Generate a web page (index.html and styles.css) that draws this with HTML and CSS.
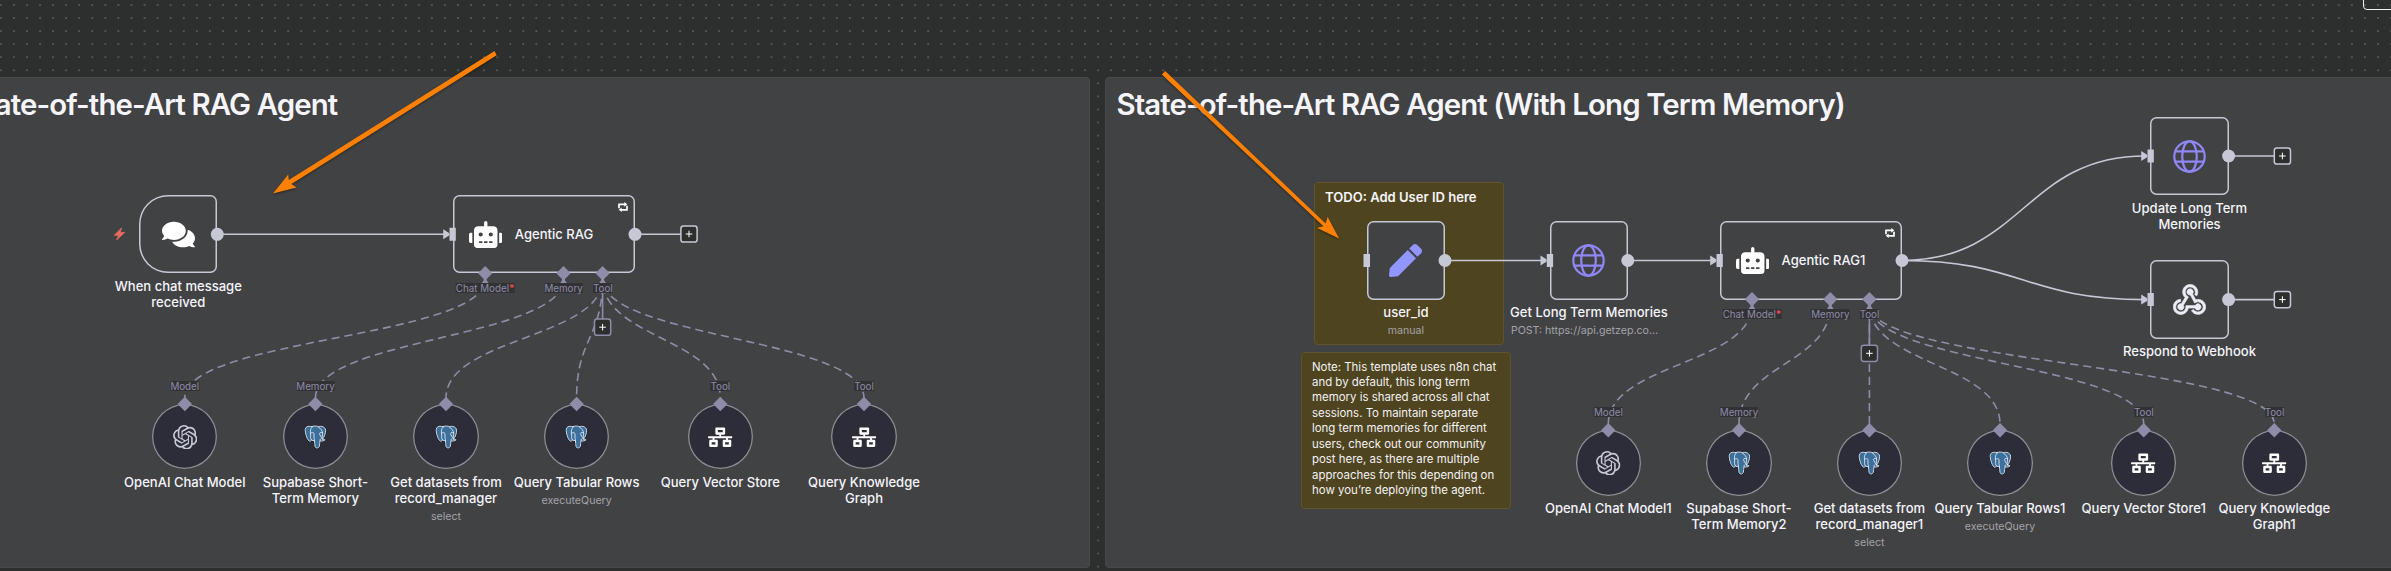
FILE: index.html
```html
<!DOCTYPE html>
<html lang="en">
<head>
<meta charset="utf-8">
<title>Workflow canvas</title>
<link rel="stylesheet" href="styles.css">
</head>
<body>
<svg class="defs" width="0" height="0" aria-hidden="true">
  <defs>
    <pattern id="grid" x="-5.7" y="-1.6" width="13.061" height="13.061" patternUnits="userSpaceOnUse"><rect x="5.85" y="5.85" width="1.45" height="1.45" fill="#6d6e6e"/></pattern>
    <symbol id="comments" viewBox="0 0 576 512"><path d="M416 192c0-88.4-93.1-160-208-160S0 103.600 0 192c0 34.300 14.100 65.900 38 92-13.400 30.200-35.500 54.200-35.800 54.500-2.200 2.300-2.800 5.700-1.500 8.700S4.800 352 8 352c36.600 0 66.900-12.300 88.700-25 32.200 15.700 70.300 25 111.300 25 114.900 0 208-71.600 208-160zm122 220c23.900-26 38-57.700 38-92 0-66.900-53.500-124.200-129.300-148.100.9 6.600 1.300 13.300 1.300 20.100 0 105.900-107.700 192-240 192-10.800 0-21.300-.8-31.700-1.900C207.800 439.600 281.800 480 368 480c41 0 79.100-9.200 111.300-25 21.800 12.700 52.100 25 88.700 25 3.200 0 6.100-1.900 7.300-4.800 1.300-2.900.7-6.300-1.500-8.700-.3-.3-22.400-24.200-35.800-54.500z"/></symbol>
    <symbol id="robot" viewBox="0 0 640 512"><path d="M32,224H64V416H32A32,32,0,0,1,0,384V256A32,32,0,0,1,32,224Zm512-48V448a64,64,0,0,1-64,64H160a64,64,0,0,1-64-64V176a80,80,0,0,1,80-80H288V32a32,32,0,0,1,64,0V96H464A80,80,0,0,1,544,176ZM264,256a40,40,0,1,0-40,40A40,40,0,0,0,264,256Zm-8,128H192v32h64Zm96,0H288v32h64ZM456,256a40,40,0,1,0-40,40A40,40,0,0,0,456,256Zm-8,128H384v32h64ZM640,256V384a32,32,0,0,1-32,32H576V224h32A32,32,0,0,1,640,256Z"/></symbol>
    <symbol id="network" viewBox="0 0 640 512"><path d="M640 264v-16c0-8.840-7.160-16-16-16H344v-40h72c17.670 0 32-14.330 32-32V32c0-17.670-14.330-32-32-32H224c-17.670 0-32 14.330-32 32v128c0 17.670 14.330 32 32 32h72v40H16c-8.840 0-16 7.160-16 16v16c0 8.840 7.160 16 16 16h104v40H64c-17.670 0-32 14.330-32 32v128c0 17.670 14.330 32 32 32h160c17.670 0 32-14.330 32-32V352c0-17.670-14.330-32-32-32h-56v-40h304v40h-56c-17.670 0-32 14.330-32 32v128c0 17.670 14.330 32 32 32h160c17.670 0 32-14.330 32-32V352c0-17.670-14.330-32-32-32h-56v-40h104c8.840 0 16-7.160 16-16zM256 128V64h128v64H256zm-64 320H96v-64h96v64zm352 0h-96v-64h96v64z"/></symbol>
    <symbol id="pen" viewBox="0 0 512 512"><path d="M290.740 93.240l128.020 128.020-277.990 277.990-114.140 12.600C11.350 513.540-1.560 500.620.14 485.340l12.700-114.220 277.900-277.880zm207.200-19.060l-60.110-60.110c-18.750-18.750-49.160-18.750-67.910 0l-56.550 56.550 128.020 128.020 56.550-56.550c18.750-18.760 18.750-49.160 0-67.910z"/></symbol>
    <symbol id="globe" viewBox="0 0 33 33"><g fill="none" stroke="currentColor" stroke-width="2.2"><circle cx="16.500" cy="16.500" r="15.200"/><ellipse cx="16.500" cy="16.500" rx="7.300" ry="15.200"/><path d="M2.500 11.300h28M2.500 21.700h28"/></g></symbol>
    <symbol id="webhook" viewBox="2 2.400 20 19"><path stroke="currentColor" stroke-width=".4" d="M10.460,19C9,21.070 6.150,21.590 4.090,20.150C2.040,18.710 1.560,15.840 3,13.750C3.870,12.500 5.210,11.830 6.580,11.770L6.630,13.200C5.720,13.270 4.840,13.740 4.270,14.560C3.270,16 3.580,17.940 4.950,18.910C6.330,19.870 8.260,19.500 9.260,18.070C9.570,17.620 9.750,17.130 9.820,16.630V15.620L15.400,15.580L15.470,15.470C16,14.550 17.150,14.230 18.050,14.750C18.950,15.270 19.260,16.430 18.730,17.350C18.200,18.260 17.040,18.580 16.140,18.060C15.730,17.830 15.440,17.460 15.310,17.040L11.240,17.060C11.130,17.730 10.870,18.380 10.460,19M17.740,11.860C20.270,12.170 22.070,14.440 21.760,16.930C21.450,19.430 19.150,21.200 16.620,20.890C15.130,20.710 13.900,19.860 13.190,18.680L14.430,17.960C14.920,18.730 15.750,19.280 16.750,19.410C18.500,19.620 20.050,18.430 20.260,16.760C20.470,15.090 19.230,13.560 17.500,13.350C16.960,13.290 16.440,13.360 15.970,13.530L15.120,13.970L12.540,9.200H12.320C11.260,9.160 10.410,8.290 10.440,7.250C10.470,6.210 11.400,5.400 12.450,5.440C13.500,5.500 14.330,6.350 14.300,7.390C14.280,7.830 14.110,8.230 13.840,8.540L15.740,12.050C16.360,11.850 17.040,11.780 17.740,11.860M8.250,9.140C7.250,6.790 8.310,4.100 10.620,3.120C12.940,2.140 15.620,3.250 16.620,5.600C17.210,6.970 17.090,8.470 16.420,9.670L15.180,8.950C15.600,8.140 15.670,7.150 15.270,6.220C14.590,4.620 12.780,3.850 11.230,4.500C9.670,5.160 8.970,7 9.650,8.600C9.930,9.260 10.400,9.770 10.970,10.110L11.360,10.320L8.290,15.310C8.320,15.360 8.360,15.420 8.390,15.500C8.880,16.410 8.540,17.560 7.620,18.050C6.710,18.540 5.560,18.180 5.060,17.240C4.570,16.310 4.910,15.160 5.830,14.670C6.220,14.460 6.650,14.410 7.060,14.500L9.370,10.730C8.900,10.300 8.500,9.760 8.250,9.140Z"/></symbol>
    <symbol id="openai" viewBox="0 0 24 24"><path d="M22.2819 9.8211a5.9847 5.9847 0 0 0-.5157-4.9108 6.0462 6.0462 0 0 0-6.5098-2.9A6.0651 6.0651 0 0 0 4.9807 4.1818a5.9847 5.9847 0 0 0-3.9977 2.9 6.0462 6.0462 0 0 0 .7427 7.0966 5.98 5.98 0 0 0 .511 4.9107 6.051 6.051 0 0 0 6.5146 2.9001A5.9847 5.9847 0 0 0 13.2599 24a6.0557 6.0557 0 0 0 5.7718-4.2058 5.9894 5.9894 0 0 0 3.9977-2.9001 6.0557 6.0557 0 0 0-.7475-7.0729zm-9.022 12.6081a4.4755 4.4755 0 0 1-2.8764-1.0408l.1419-.0804 4.7783-2.7582a.7948.7948 0 0 0 .3927-.6813v-6.7369l2.02 1.1686a.071.071 0 0 1 .038.052v5.5826a4.504 4.504 0 0 1-4.4945 4.4944zm-9.6607-4.1254a4.4708 4.4708 0 0 1-.5346-3.0137l.142.0852 4.783 2.7582a.7712.7712 0 0 0 .7806 0l5.8428-3.3685v2.3324a.0804.0804 0 0 1-.0332.0615L9.74 19.9502a4.4992 4.4992 0 0 1-6.1408-1.6464zM2.3408 7.8956a4.485 4.485 0 0 1 2.3655-1.9728V11.6a.7664.7664 0 0 0 .3879.6765l5.8144 3.3543-2.0201 1.1685a.0757.0757 0 0 1-.071 0l-4.8303-2.7865A4.504 4.504 0 0 1 2.3408 7.872zm16.5963 3.8558L13.1038 8.364 15.1192 7.2a.0757.0757 0 0 1 .071 0l4.8303 2.7913a4.4944 4.4944 0 0 1-.6765 8.1042v-5.6772a.79.79 0 0 0-.407-.667zm2.0107-3.0231l-.142-.0852-4.7735-2.7818a.7759.7759 0 0 0-.7854 0L9.409 9.2297V6.8974a.0662.0662 0 0 1 .0284-.0615l4.8303-2.7866a4.4992 4.4992 0 0 1 6.6802 4.66zM8.3065 12.863l-2.02-1.1638a.0804.0804 0 0 1-.038-.0567V6.0742a4.4992 4.4992 0 0 1 7.3757-3.4537l-.142.0805L8.704 5.459a.7948.7948 0 0 0-.3927.6813zm1.0976-2.3654l2.602-1.4998 2.6069 1.4998v2.9994l-2.5974 1.4997-2.6067-1.4997Z"/></symbol>
    <symbol id="postgres" viewBox="0 0 24 25">
      <g stroke-linejoin="round" stroke-linecap="round">
        <path fill="#15171c" stroke="#15171c" stroke-width="1.800" d="M8 1.600C4.500.4 1.600 1.800 1.700 5.400c.1 3.300 1.600 8.300 3.500 10.500 1 1.200 2.200.5 3-.4l3 .6c.3 1.600.1 4.100.6 6 .5 1.700 3.700 2 4.400-.4.4-1.700.3-4 .6-5.500 1.500.5 4.300.2 5.300-1.200-1 .1-2 .1-2.600-.4 1.700-2.500 3.300-6.400 3.100-9.300-.3-3.400-4.300-4.700-7.300-3.700C13.300.8 10.500.8 8 1.600z"/>
        <path fill="#3d6f9c" stroke="#e6ecf2" stroke-width=".9" d="M8 1.600C4.500.4 1.600 1.800 1.700 5.400c.1 3.300 1.600 8.300 3.500 10.500 1 1.200 2.200.5 3-.4l3 .6c.3 1.600.1 4.100.6 6 .5 1.700 3.700 2 4.400-.4.4-1.700.3-4 .6-5.500 1.500.5 4.300.2 5.300-1.200-1 .1-2 .1-2.600-.4 1.700-2.500 3.300-6.400 3.100-9.300-.3-3.400-4.300-4.700-7.300-3.700C13.300.8 10.500.8 8 1.600z"/>
        <path fill="none" stroke="#e6ecf2" stroke-width=".9" d="M9.300 1.700C6.300 4 7 8 7.300 10c.2 2.100-.8 3.600 1 5.300M7.400 8.400c1-.9 2.500-.8 3.100 0 .7 1.500-.2 4 .4 5.500.3.8.3 1.500.3 2.200M15.300 2.100c2.600 1.400 4.100 4.200 4.200 6.200.1 2.300-1.100 4 .1 6M19.400 8c-1.400-.8-2.600-.5-2.900.3-.3 2.300 1.800 3.900 2.800 5.900M16.800 15.600c-.1-.7.300-1.100.9-1.500"/>
      </g>
    </symbol>
    <symbol id="loop" viewBox="0 0 10 10"><path fill="none" stroke="#fff" stroke-width="1.700" d="M1 6.200V2.300h6M9 3.800v4H3"/><path fill="#fff" d="M6.300 0L9.300 2.300 6.300 4.700zM3.700 5.400L.7 7.700l3 2.300z"/></symbol>
    <g id="out"><circle r="6.500" fill="#c6c8d6"/></g>
    <g id="in"><path fill="#c6c8d6" d="M-3-6.500h6.300v13H-3zM-9.300-5L-3.400-1.300V1.300L-9.300 5z"/></g>
    <path id="arrow-foot" fill="#8e8ca8" d="M-1.500 4h3v3L3.500 10h-7L-1.500 7z"/>
    <path id="diamond" fill="#8e8ca8" d="M0-7.200L7.200 0 0 7.200-7.200 0z"/>
    <g id="add"><rect x="-8.100" y="-8.100" width="16.200" height="16.200" rx="2.600" fill="#2d2e2e" stroke="currentColor" stroke-width="1.500"/><path d="M-3.300 0h6.600M0-3.300v6.600" stroke="#fff" stroke-width="1"/></g>
  </defs>
</svg>

<main class="canvas">
  <svg class="layer" width="2391" height="571"><rect width="2391" height="571" fill="url(#grid)"/></svg>

  <section class="sticky gray panel-a"><h1>State-of-the-Art RAG Agent</h1></section>
  <section class="sticky gray panel-b"><h1>State-of-the-Art RAG Agent (With Long Term Memory)</h1></section>
  <section class="sticky gold todo"><h4>TODO: Add User ID here</h4></section>
  <section class="sticky gold note"><p>Note: This template uses n8n chat<br>and by default, this long term<br>memory is shared across all chat<br>sessions. To maintain separate<br>long term memories for different<br>users, check out our community<br>post here, as there are multiple<br>approaches for this depending on<br>how you’re deploying the agent.</p></section>

  <svg class="layer" width="2391" height="571" fill="none">
    <g class="wire">
      <path d="M217 234.300H445M635 234.300H681M1445 260.500H1542M1628 260.500H1712M2229 156H2274M2229 299.600H2274"/>
      <path d="M1902 260.500C2022 260.500 2025 156 2145 156M1902 260.500C2022 260.500 2025 299.600 2145 299.600"/>
    </g>
    <g class="wire soft">
      <path d="M602.600 280V319M1869.400 306V345"/>
      <g class="dash">
        <path d="M485.200 279C485.200 338 184.800 338 184.800 398"/>
        <path d="M563.500 279C563.500 338 315.400 338 315.400 398"/>
        <path d="M602.600 279C602.600 338 446 338 446 398"/>
        <path d="M602.600 279C602.600 338 576.600 338 576.600 398"/>
        <path d="M602.600 279C602.600 338 720.300 338 720.300 398"/>
        <path d="M602.600 279C602.600 338 864 338 864 398"/>
        <path d="M1752 305C1752 364 1608.300 364 1608.300 424"/>
        <path d="M1830.300 305C1830.300 364 1739 364 1739 424"/>
        <path d="M1869.400 305V424"/>
        <path d="M1869.400 305C1869.400 364 2000 364 2000 424"/>
        <path d="M1869.400 305C1869.400 364 2143.700 364 2143.700 424"/>
        <path d="M1869.400 305C1869.400 364 2274.300 364 2274.300 424"/>
      </g>
    </g>
  </svg>

  <article class="node trigger"><div class="box round"><svg class="i33"><use href="#comments"/></svg></div><b>When chat message<br>received</b></article>
  <article class="node agent-a"><div class="box wide"><svg class="robot"><use href="#robot"/></svg><b>Agentic RAG</b><svg class="loop"><use href="#loop"/></svg></div></article>
  <article class="node user"><div class="box"><svg class="i33 pen"><use href="#pen"/></svg></div><b>user_id</b><small>manual</small></article>
  <article class="node getltm"><div class="box"><svg class="i33 globe"><use href="#globe"/></svg></div><b>Get Long Term Memories</b><small class="clip">POST: https://api.getzep.co...</small></article>
  <article class="node agent-b"><div class="box wide"><svg class="robot"><use href="#robot"/></svg><b>Agentic RAG1</b><svg class="loop"><use href="#loop"/></svg></div></article>
  <article class="node update"><div class="box"><svg class="i33 globe"><use href="#globe"/></svg></div><b>Update Long Term<br>Memories</b></article>
  <article class="node respond"><div class="box"><svg class="i33 hook"><use href="#webhook"/></svg></div><b>Respond to Webhook</b></article>

  <article class="node sub a1"><div class="disc"><svg class="i24 ai"><use href="#openai"/></svg></div><b>OpenAI Chat Model</b></article>
  <article class="node sub a2"><div class="disc"><svg class="i24"><use href="#postgres"/></svg></div><b>Supabase Short-<br>Term Memory</b></article>
  <article class="node sub a3"><div class="disc"><svg class="i24"><use href="#postgres"/></svg></div><b>Get datasets from<br>record_manager</b><small>select</small></article>
  <article class="node sub a4"><div class="disc"><svg class="i24"><use href="#postgres"/></svg></div><b>Query Tabular Rows</b><small>executeQuery</small></article>
  <article class="node sub a5"><div class="disc"><svg class="i24"><use href="#network"/></svg></div><b>Query Vector Store</b></article>
  <article class="node sub a6"><div class="disc"><svg class="i24"><use href="#network"/></svg></div><b>Query Knowledge<br>Graph</b></article>

  <article class="node sub b1"><div class="disc"><svg class="i24 ai"><use href="#openai"/></svg></div><b>OpenAI Chat Model1</b></article>
  <article class="node sub b2"><div class="disc"><svg class="i24"><use href="#postgres"/></svg></div><b>Supabase Short-<br>Term Memory2</b></article>
  <article class="node sub b3"><div class="disc"><svg class="i24"><use href="#postgres"/></svg></div><b>Get datasets from<br>record_manager1</b><small>select</small></article>
  <article class="node sub b4"><div class="disc"><svg class="i24"><use href="#postgres"/></svg></div><b>Query Tabular Rows1</b><small>executeQuery</small></article>
  <article class="node sub b5"><div class="disc"><svg class="i24"><use href="#network"/></svg></div><b>Query Vector Store1</b></article>
  <article class="node sub b6"><div class="disc"><svg class="i24"><use href="#network"/></svg></div><b>Query Knowledge<br>Graph1</b></article>

  <svg class="layer" width="2391" height="571">
    <use href="#out" x="217.300" y="234.300"/><use href="#out" x="635" y="234.300"/><use href="#out" x="1445" y="260.500"/><use href="#out" x="1627.800" y="260.500"/><use href="#out" x="1902" y="260.500"/><use href="#out" x="2228.600" y="156"/><use href="#out" x="2228.600" y="299.600"/>
    <use href="#in" x="452.500" y="234.300"/><use href="#in" x="1549.800" y="260.500"/><use href="#in" x="1719.500" y="260.500"/><use href="#in" x="2150.500" y="156"/><use href="#in" x="2150.500" y="299.600"/>
    <rect x="1363.500" y="254" width="6.500" height="13" fill="#c6c8d6"/>
    <use href="#arrow-foot" x="485.200" y="273.200"/><use href="#arrow-foot" x="563.500" y="273.200"/><use href="#arrow-foot" x="602.600" y="273.200"/><use href="#arrow-foot" x="1752" y="299.300"/><use href="#arrow-foot" x="1830.300" y="299.300"/><use href="#arrow-foot" x="1869.400" y="299.300"/>
    <use href="#diamond" x="485.200" y="273.200"/><use href="#diamond" x="563.500" y="273.200"/><use href="#diamond" x="602.600" y="273.200"/><use href="#diamond" x="1752" y="299.300"/><use href="#diamond" x="1830.300" y="299.300"/><use href="#diamond" x="1869.400" y="299.300"/>
    <use href="#diamond" x="184.800" y="404"/><use href="#diamond" x="315.400" y="404"/><use href="#diamond" x="446" y="404"/><use href="#diamond" x="576.600" y="404"/><use href="#diamond" x="720.300" y="404"/><use href="#diamond" x="864" y="404"/>
    <use href="#diamond" x="1608.300" y="430.200"/><use href="#diamond" x="1739" y="430.200"/><use href="#diamond" x="1869.400" y="430.200"/><use href="#diamond" x="2000" y="430.200"/><use href="#diamond" x="2143.700" y="430.200"/><use href="#diamond" x="2274.300" y="430.200"/>
    <g color="#c6c8d6"><use href="#add" x="689" y="234"/><use href="#add" x="2282.400" y="156"/><use href="#add" x="2282.400" y="299.600"/></g>
    <g color="#8e8ca8"><use href="#add" x="602.600" y="327.200"/><use href="#add" x="1869.400" y="353.300"/></g>
    <path fill="#e8695e" stroke="#e8695e" stroke-width=".8" stroke-linejoin="round" d="M121.500 227.900l-7.200 7.400h4.300l-2 4.700 8.200-7.600h-4.600z"/>
  </svg>

  <span class="port pa1">Chat Model<i>*</i></span><span class="port pa2">Memory</span><span class="port pa3">Tool</span>
  <span class="port pa4">Model</span><span class="port pa5">Memory</span><span class="port pa6">Tool</span><span class="port pa7">Tool</span>
  <span class="port pb1">Chat Model<i>*</i></span><span class="port pb2">Memory</span><span class="port pb3">Tool</span>
  <span class="port pb4">Model</span><span class="port pb5">Memory</span><span class="port pb6">Tool</span><span class="port pb7">Tool</span>

  <svg class="layer pointers" width="2391" height="571" fill="#ff8000">
    <path d="M494.500 51L288.800 180l-.6-5.600L273 193.500l23.400-6-5-3.400L496.700 55.200z"/>
    <path d="M1165.200 70.900l160.400 152.700 2.100-6.500 11.400 21.300-21.900-10.300 6.300-1.900L1161.800 74.400z"/>
  </svg>
  <div class="corner-button"></div>
</main>
</body>
</html>
```

FILE: styles.css
```css
* { box-sizing: border-box; }
body { margin: 0; background: #2d2e2e; font-family: Inter, "Liberation Sans", sans-serif; }
.canvas { position: relative; width: 2391px; height: 571px; overflow: hidden; color: #f5f4fa; }
.layer { position: absolute; left: 0; top: 0; }
.defs { position: absolute; }

.sticky { position: absolute; border-radius: 4px; border: 1px solid; }
.sticky h1, .sticky h4, .sticky p { margin: 0; white-space: nowrap; }
.gray { background: #414244; border-color: #48494a; padding: 8px 10.5px; }
.gray h1 { font-size: 29.4px; line-height: 37px; font-weight: 600; letter-spacing: -.9px; }
.gold { background: #4f4420; border-color: #62542a; padding: 10px; }
.gold h4 { font-size: 13.06px; line-height: 17px; font-weight: 600; }
.gold p { font-size: 11.43px; line-height: 15.43px; color: #f3f2f5; }
.panel-a { left: -44.5px; top: 77px; width: 1134px; height: 490.5px; }
.panel-b { left: 1105px; top: 77px; width: 1300px; height: 490.5px; }
.todo { left: 1314px; top: 182px; width: 190px; height: 163px; padding-top: 6px; }
.note { left: 1301px; top: 352px; width: 210px; height: 157px; padding-top: 6.5px; }

.wire { stroke: #c6c8d6; stroke-width: 1.6; }
.wire.soft { stroke: #8e8ca8; }
.dash { stroke-dasharray: 8.16 4.9; stroke-dashoffset: 6.5; }

.node { position: absolute; display: flex; flex-direction: column; align-items: center; width: 160px; text-align: center; white-space: nowrap; }
.node b { font-size: 13.06px; line-height: 16px; font-weight: 500; margin-top: 4.3px; }
.node small { font-size: 10.61px; line-height: 14.3px; margin-top: 4.2px; color: #a3a3a9; }
.box { display: flex; align-items: center; justify-content: center; width: 78.4px; height: 78.4px; background: #414244; box-shadow: inset 0 0 0 1.5px #c6c8d6; border-radius: 6.5px; }
.round { border-radius: 29px 6.5px 6.5px 29px; }
.wide { position: relative; width: 182.4px; justify-content: flex-start; padding-left: 16px; gap: 12.5px; }
.node .wide b { margin: 0; }
.robot { width: 33.5px; height: 27px; fill: #fff; }
.loop { position: absolute; right: 7px; top: 7.3px; width: 10px; height: 10px; }
.i33 { width: 33px; height: 33px; fill: #fff; }
.i33.pen { fill: #9096fe; }
.globe { color: #8f87f7; }
.i33.hook { color: #ececf6; fill: #ececf6; }
.disc { display: flex; align-items: center; justify-content: center; width: 65.3px; height: 65.3px; border-radius: 50%; background: #2d2d3a; box-shadow: inset 0 0 0 1.3px #8d8d92; }
.i24 { width: 24.5px; height: 24.5px; fill: #fff; }
.i24.ai { fill: #c6c8d6; }
.clip { align-self: flex-start; padding-left: 2px; }

.trigger { left: 98.3px; top: 195.1px; }
.agent-a { left: 464px; top: 195.1px; }
.user { left: 1326px; top: 221.2px; }
.getltm { left: 1508.9px; top: 221.2px; }
.agent-b { left: 1730.8px; top: 221.2px; }
.update { left: 2109.5px; top: 116.9px; }
.respond { left: 2109.5px; top: 260.4px; }
.sub { top: 404.2px; }
.a1 { left: 104.8px; }
.a2 { left: 235.4px; }
.a3 { left: 366px; }
.a4 { left: 496.6px; }
.a5 { left: 640.3px; }
.a6 { left: 784px; }
.b1, .b2, .b3, .b4, .b5, .b6 { top: 430.3px; }
.b1 { left: 1528.3px; }
.b2 { left: 1659px; }
.b3 { left: 1789.4px; }
.b4 { left: 1920px; }
.b5 { left: 2063.7px; }
.b6 { left: 2194.3px; }

.port { position: absolute; transform: translateX(-50%); background: #323235; color: #8e8ca8; font-size: 9.8px; line-height: 11px; height: 10px; white-space: nowrap; }
.port i { font-style: normal; font-weight: 700; color: #f0484f; }
.pa1, .pa2, .pa3 { top: 283px; }
.pa4, .pa5, .pa6, .pa7 { top: 381px; }
.pb1, .pb2, .pb3 { top: 309px; }
.pb4, .pb5, .pb6, .pb7 { top: 407px; }
.pa1 { left: 485.2px; }
.pa2 { left: 563.6px; }
.pa3 { left: 602.8px; }
.pa4 { left: 184.8px; }
.pa5 { left: 315.5px; }
.pa6 { left: 720.3px; }
.pa7 { left: 864px; }
.pb1 { left: 1752px; }
.pb2 { left: 1830.4px; }
.pb3 { left: 1869.5px; }
.pb4 { left: 1608.4px; }
.pb5 { left: 1739px; }
.pb6 { left: 2143.8px; }
.pb7 { left: 2274.5px; }

.pointers { filter: drop-shadow(.5px 1px .8px rgba(0, 0, 0, .45)); }
.corner-button { position: absolute; left: 2363px; top: -30px; width: 60px; height: 40px; border: 1.3px solid #f2f2f6; border-radius: 4px; }
```
